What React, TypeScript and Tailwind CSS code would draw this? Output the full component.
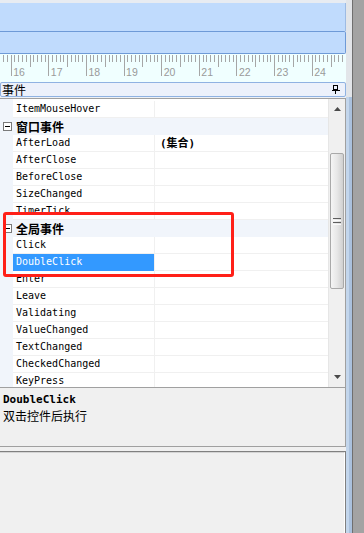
import React from "react";

type Row =
  | { kind: "cat"; label: string }
  | { kind: "item"; name: string; value?: string; selected?: boolean };

const rows: Row[] = [
  { kind: "item", name: "ItemMouseHover" },
  { kind: "cat", label: "窗口事件" },
  { kind: "item", name: "AfterLoad", value: "(集合)" },
  { kind: "item", name: "AfterClose" },
  { kind: "item", name: "BeforeClose" },
  { kind: "item", name: "SizeChanged" },
  { kind: "item", name: "TimerTick" },
  { kind: "cat", label: "全局事件" },
  { kind: "item", name: "Click" },
  { kind: "item", name: "DoubleClick", selected: true },
  { kind: "item", name: "Enter" },
  { kind: "item", name: "Leave" },
  { kind: "item", name: "Validating" },
  { kind: "item", name: "ValueChanged" },
  { kind: "item", name: "TextChanged" },
  { kind: "item", name: "CheckedChanged" },
  { kind: "item", name: "KeyPress" },
];

function Ruler() {
  const step = 3.7625;
  const ticks: { x: number; len: number }[] = [];
  for (let i = -3; i < 95; i++) {
    const x = 10.7 + i * step;
    if (x < 0 || x > 345) continue;
    const len = i % 10 === 0 ? 21 : i % 5 === 0 ? 12 : 7;
    ticks.push({ x: Math.round(x) + 0.5, len });
  }
  const labels = [16, 17, 18, 19, 20, 21, 22, 23, 24];
  return (
    <svg width="346" height="28" className="block">
      {ticks.map((t, i) => (
        <line
          key={i}
          x1={t.x}
          x2={t.x}
          y1={1}
          y2={1 + t.len}
          stroke="#a6a6a6"
          strokeWidth={1}
          shapeRendering="crispEdges"
        />
      ))}
      {labels.map((n, k) => (
        <text
          key={n}
          x={10.7 + k * 37.625 + 2.5}
          y={21.5}
          fontSize={10.5}
          fill="#9a9a9a"
          fontFamily="'Liberation Sans', sans-serif"
        >
          {n}
        </text>
      ))}
    </svg>
  );
}

function MinusBox() {
  return (
    <svg width="9" height="9" className="block">
      <rect x="0.5" y="0.5" width="8" height="8" fill="#fff" stroke="#7a7a7a" shapeRendering="crispEdges" />
      <line x1="2" x2="7" y1="4.5" y2="4.5" stroke="#000" shapeRendering="crispEdges" />
    </svg>
  );
}

function Pin() {
  return (
    <svg width="8" height="9" className="block">
      <rect x="1.5" y="0.5" width="4" height="4" fill="none" stroke="#000" shapeRendering="crispEdges" />
      <line x1="5" x2="5" y1="0" y2="5" stroke="#000" shapeRendering="crispEdges" />
      <line x1="0" x2="8" y1="5.5" y2="5.5" stroke="#000" shapeRendering="crispEdges" />
      <line x1="3.5" x2="3.5" y1="6" y2="9" stroke="#000" shapeRendering="crispEdges" />
    </svg>
  );
}

function Arrow({ down }: { down?: boolean }) {
  return (
    <svg width="7" height="4" className="block">
      <polygon points={down ? "0,0 7,0 3.5,4" : "3.5,0 7,4 0,4"} fill="#4a4a4a" />
    </svg>
  );
}

function Scrollbar() {
  return (
    <div className="flex w-[17px] flex-col border-l border-[#e6e6e6] bg-[#f0f0f0]">
      <div className="h-[1px]" />
      <div className="flex h-[17px] items-center justify-center">
        <Arrow />
      </div>
      <div className="h-[36px]" />
      <div className="ml-[1px] flex h-[136px] w-[14px] items-center justify-center rounded-[2px] border border-[#a9a9a9] bg-gradient-to-r from-[#f5f5f5] via-[#e7e7e7] to-[#d0d0d0]">
        <div className="flex w-[8px] flex-col gap-[1px]">
          <div className="h-[1px] bg-[#5e5e5e]" />
          <div className="h-[1px] bg-[#fafafa]" />
          <div className="h-[1px] bg-[#5e5e5e]" />
          <div className="h-[1px] bg-[#fafafa]" />
        </div>
      </div>
      <div className="h-[79px]" />
      <div className="flex h-[17px] items-center justify-center">
        <Arrow down />
      </div>
    </div>
  );
}

function GridRow({ row }: { row: Row }) {
  if (row.kind === "cat") {
    return (
      <div className="flex h-[17px] shrink-0 items-center bg-[#f1f5fb]">
        <div className="flex w-[13px] shrink-0 justify-start pl-[3px]">
          <MinusBox />
        </div>
        <span className="pl-[3px] font-['Noto_Sans_CJK_SC',sans-serif] text-[12px] font-bold leading-none text-black">
          {row.label}
        </span>
      </div>
    );
  }
  return (
    <div className="flex h-[17px] shrink-0">
      <div className="w-[13px] shrink-0 bg-[#f1f5fb]" />
      <div
        className={`flex w-[141px] shrink-0 items-center border-b pl-[3px] ${
          row.selected ? "border-[#3399ff] bg-[#3399ff] text-white" : "border-[#f0f0f0] bg-white text-black"
        }`}
      >
        <span className="font-['DejaVu_Sans_Mono','Noto_Sans_CJK_SC',monospace] text-[10px] leading-none">
          {row.name}
        </span>
      </div>
      <div className="flex flex-1 items-center border-b border-l border-[#f0f0f0] bg-white pl-[5px]">
        {row.value ? (
          <span className="font-['DejaVu_Sans_Mono','Noto_Sans_CJK_SC',monospace] text-[11px] font-bold leading-none text-black">
            {row.value}
          </span>
        ) : null}
      </div>
    </div>
  );
}

export default function App() {
  return (
    <div className="relative flex h-[533px] w-[364px] overflow-hidden bg-[#a3a3a3]">
      <div className="flex w-[346px] shrink-0 flex-col bg-[#f0f0f0]">
        <div className="h-[3px] bg-[#e8ecf2]" />
        <div className="h-[28px] border-r border-[#9dbbe4] bg-[#c0dbfd]" />
        <div className="h-[23px] rounded-r-[2px] border border-l-0 border-[#6e9ad7] bg-[#c0dbfd]" />
        <div className="h-[28px] bg-[#f0ffff]">
          <Ruler />
        </div>
        <div className="flex h-[15px] items-center justify-between rounded-[2px] border border-[#8fb2e2] bg-[#ecf1fb] pl-[1px] pr-[5px]">
          <span className="font-['Noto_Sans_CJK_SC',sans-serif] text-[12px] leading-none text-black">事件</span>
          <Pin />
        </div>
        <div className="h-[1px] bg-[#eef1f6]" />
        <div className="flex h-[289px] border-t border-r border-[#a0a0a0] bg-white">
          <div className="flex w-[328px] shrink-0 flex-col overflow-hidden">
            <div className="flex h-[2px] shrink-0">
              <div className="w-[13px] bg-[#f1f5fb]" />
            </div>
            {rows.map((r, i) => (
              <GridRow key={i} row={r} />
            ))}
          </div>
          <Scrollbar />
        </div>
        <div className="h-[1px] bg-[#a0a0a0]" />
        <div className="flex h-[59px] flex-col border-r border-b border-[#a0a0a0] bg-[#f0f0f0] pl-[3px] pt-[4px]">
          <div className="h-[15px] font-['DejaVu_Sans_Mono',monospace] text-[11px] font-bold leading-[15px] text-black">
            DoubleClick
          </div>
          <div className="h-[18px] font-['Noto_Sans_CJK_SC',sans-serif] text-[12px] leading-[18px] text-black">
            双击控件后执行
          </div>
        </div>
        <div className="h-[4px] bg-[#f0f0f0]" />
        <div className="flex-1 border-t border-r border-[#808080] bg-[#f0f0f0]">
          <div className="h-full border-t border-r border-[#d4d4d4] border-r-white" />
        </div>
      </div>
      <div className="flex w-[6px] shrink-0 flex-col">
        <div className="h-[97px] bg-[#e2e5e9]" />
        <div className="flex flex-1">
          <div className="w-[3px] bg-[#c3d6ec]" />
          <div className="w-[3px] bg-[#aac1dd]" />
        </div>
      </div>
      <div className="w-[1px] shrink-0 bg-[#6f6f6f]" />
      <div className="flex-1 bg-[#a3a3a3]" />
      <div className="absolute left-[3px] top-[212px] h-[65px] w-[231px] rounded-[3px] border-[3px] border-[#ff2018]" />
    </div>
  );
}
